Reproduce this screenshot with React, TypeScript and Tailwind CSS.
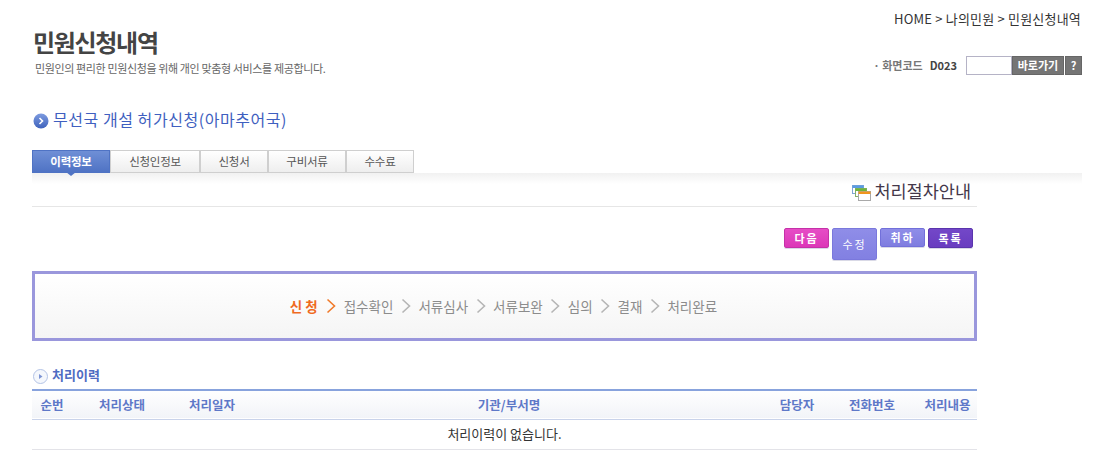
import React from 'react';

const font = "font-['Noto_Sans_CJK_KR','Noto_Sans',sans-serif]";

const tabs = [
  { label: '이력정보', width: 'w-[78px]' },
  { label: '신청인정보', width: 'w-[90px]' },
  { label: '신청서', width: 'w-[68px]' },
  { label: '구비서류', width: 'w-[78px]' },
  { label: '수수료', width: 'w-[68px]' },
];

const steps = ['접수확인', '서류심사', '서류보완', '심의', '결재', '처리완료'];

const Chevron = ({ color }: { color: string }) => (
  <svg width="10" height="16" viewBox="0 0 10 16" fill="none">
    <path d="M1.5 1.5 L8.5 8 L1.5 14.5" stroke={color} strokeWidth="1.6" />
  </svg>
);

const WindowsIcon = () => (
  <svg width="19" height="16" viewBox="0 0 19 16">
    <rect x="0.5" y="0.5" width="11" height="8" fill="#fff" stroke="#7fa6d6" />
    <rect x="0.5" y="0.5" width="11" height="2.5" fill="#5b9be0" />
    <rect x="3.5" y="3.5" width="11" height="8" fill="#fff" stroke="#86b06a" />
    <rect x="3.5" y="3.5" width="11" height="2.5" fill="#6fb33a" />
    <rect x="6.5" y="6.5" width="12" height="9" fill="#fff" stroke="#a9a9a9" />
    <rect x="6.5" y="6.5" width="12" height="2.5" fill="#f0951e" />
  </svg>
);

export default function App() {
  return (
    <div className={`${font} w-[1096px] h-[458px] overflow-hidden bg-white pl-8 pr-3.5`}>
      {/* Header */}
      <div className="relative h-[100px]">
        <div className="flex justify-end pt-[10px] text-[13px] leading-[18px] tracking-[0.2px] text-[#333] pr-px">
          HOME &gt; 나의민원 &gt; 민원신청내역
        </div>
        <div className="flex items-start justify-between">
          <div>
            <h1 className="-mt-[1px] ml-px text-[24px] leading-[30px] font-bold tracking-[-1.3px] text-[#444]">민원신청내역</h1>
            <p className="mt-[3px] ml-[3px] text-[11px] leading-4 tracking-[-0.37px] text-[#666]">
              민원인의 편리한 민원신청을 위해 개인 맞춤형 서비스를 제공합니다.
            </p>
          </div>
          <div className="mt-[28px] flex items-center">
            <span className="text-[11px] font-bold text-[#777] mr-[7px]">· 화면코드</span>
            <span className="text-[11px] font-bold text-[#444] mr-[9px]">D023</span>
            <input className="h-[19px] w-[46px] border border-[#b5b3c6] bg-white" />
            <button className="h-[19px] w-[52px] border border-[#666] bg-[#757575] text-[11px] font-bold leading-[17px] text-white">바로가기</button>
            <button className="ml-px h-[19px] w-[17px] border border-[#666] bg-[#757575] text-[11px] font-bold leading-[17px] text-white">?</button>
          </div>
        </div>
      </div>

      {/* Section title */}
      <div className="flex h-[50px] items-start gap-[4px] pt-[8px]">
        <svg width="16" height="16" viewBox="0 0 16 16" className="mt-[5px] ml-[1px]">
          <defs>
            <linearGradient id="ball" x1="0" y1="0" x2="0" y2="1">
              <stop offset="0" stopColor="#7d9be0" />
              <stop offset="1" stopColor="#3f63bc" />
            </linearGradient>
          </defs>
          <circle cx="8" cy="8" r="7.5" fill="url(#ball)" />
          <path d="M6.5 5 L9.5 8 L6.5 11" stroke="#fff" strokeWidth="1.6" fill="none" />
        </svg>
        <h2 className="text-[16px] leading-[22px] tracking-[0.55px] text-[#3f5fc0]">무선국 개설 허가신청(아마추어국)</h2>
      </div>

      {/* Tabs */}
      <div className="relative flex h-[23px]">
        {tabs.map((tab, i) =>
          i === 0 ? (
            <div key={tab.label} className={`${tab.width} relative border border-[#4f73c4] bg-gradient-to-b from-[#6f8fd6] to-[#4f73c4] text-center text-[11.5px] font-bold leading-[21px] tracking-[-0.25px] text-white`}>
              {tab.label}
              <span className="absolute left-[33px] top-[21px] border-x-[5px] border-t-[4px] border-x-transparent border-t-[#4f73c4]" />
            </div>
          ) : (
            <div key={tab.label} className={`${tab.width} border border-[#cfcfcf] bg-gradient-to-b from-white to-[#eeeeee] text-center text-[11.5px] leading-[21px] tracking-[-0.25px] text-[#555]`}>
              {tab.label}
            </div>
          ),
        )}
      </div>

      {/* Procedure guide */}
      <div className="h-[11px] bg-gradient-to-b from-[#f1f1f1] to-white" />
      <div className="w-[945px] h-[23px] border-b border-[#e6e6e6] flex items-start justify-end gap-[3px] pr-[6px]">
        <span className="mt-[1px]"><WindowsIcon /></span>
        <span className="text-[17.5px] leading-[14px] text-[#44384a]">처리절차안내</span>
      </div>

      {/* Action buttons */}
      <div className="w-[945px] h-[64px] flex items-start justify-end gap-[3px] pr-1 pt-[21px]">
        <button className="h-5 w-[45px] rounded-[2px] border border-[#c531a8] bg-gradient-to-b from-[#e64cc6] to-[#dc37b8] text-[11px] font-bold leading-[15px] tracking-[2px] text-white shadow-[0_1px_0_#d9d9e6]">다음</button>
        <button className="h-8 w-[45px] rounded-[2px] border border-[#7a78dc] bg-gradient-to-b from-[#8f8de8] to-[#8280e2] text-[11px] leading-[14px] tracking-[2px] text-white shadow-[0_1px_0_#d9d9e6]">수정</button>
        <button className="h-[19px] w-[45px] rounded-[2px] border border-[#7270da] bg-gradient-to-b from-[#8f8de8] to-[#7f7de0] text-[11px] font-bold leading-[15px] tracking-[2px] text-white shadow-[0_1px_0_#d9d9e6]">취하</button>
        <button className="h-5 w-[45px] rounded-[2px] border border-[#5a35ad] bg-gradient-to-b from-[#7347c8] to-[#693dc0] text-[11px] font-bold leading-[15px] tracking-[2px] text-white shadow-[0_1px_0_#d9d9e6]">목록</button>
      </div>

      {/* Steps */}
      <div className="flex h-[70px] w-[945px] items-center justify-center gap-[7.5px] border-[3px] border-[#9a97dc] bg-gradient-to-b from-white to-[#f5f5f5] pr-[2px] text-[13.5px]">
        <span className="-mr-[2px] font-bold tracking-[3px] text-[#ef6a1f]">신청</span>
        <Chevron color="#f07a2a" />
        {steps.map((step, i) => (
          <React.Fragment key={step}>
            <span className="text-[#8c8c8c]">{step}</span>
            {i < steps.length - 1 && <Chevron color="#b5b5b5" />}
          </React.Fragment>
        ))}
      </div>

      {/* History */}
      <div className="mt-[25px] flex h-[23px] items-start gap-[4px] ml-[1px]">
        <svg width="15" height="15" viewBox="0 0 15 15" className="mt-[3px]">
          <circle cx="7.5" cy="7.5" r="7" fill="#f4f7fc" stroke="#b3c3e6" />
          <path d="M6 5 L9.5 7.5 L6 10 Z" fill="#7d94d4" />
        </svg>
        <h3 className="text-[13px] font-bold leading-[18px] text-[#4f6cc2]">처리이력</h3>
      </div>

      <table className="w-[945px] table-fixed border-t-2 border-[#88a3dd] text-[12.5px]">
        <colgroup>
          <col className="w-[40px]" />
          <col className="w-[100px]" />
          <col className="w-[80px]" />
          <col className="w-[514px]" />
          <col className="w-[62px]" />
          <col className="w-[76px]" />
          <col className="w-[73px]" />
        </colgroup>
        <thead>
          <tr className="h-[29px] border-b border-[#c9d3ea] bg-gradient-to-b from-white to-[#f2f4f8] font-bold text-[#5e78c8]">
            <th className="pt-px font-bold">순번</th>
            <th className="pt-px font-bold">처리상태</th>
            <th className="pt-px font-bold">처리일자</th>
            <th className="pt-px font-bold">기관/부서명</th>
            <th className="pt-px font-bold">담당자</th>
            <th className="pt-px pl-[12px] font-bold whitespace-nowrap">전화번호</th>
            <th className="pt-px pl-[14px] font-bold whitespace-nowrap">처리내용</th>
          </tr>
        </thead>
        <tbody>
          <tr className="h-[30px] border-b border-[#e3e3e8]">
            <td colSpan={7} className="pb-px text-center text-[13px] text-[#333]">처리이력이 없습니다.</td>
          </tr>
        </tbody>
      </table>
    </div>
  );
}
